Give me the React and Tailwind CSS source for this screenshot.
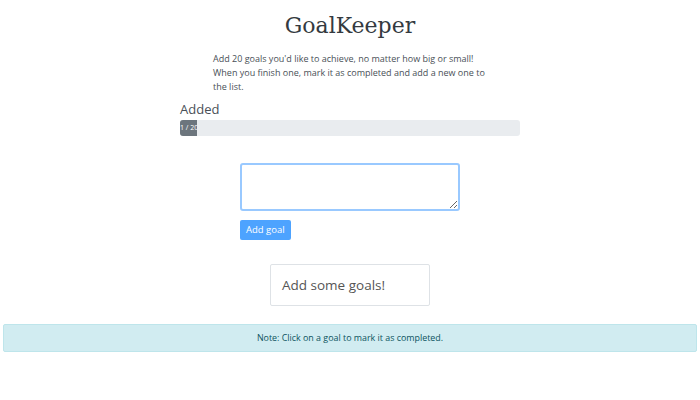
import React from 'react';

export default function App() {
  return (
    <div className="w-[700px] h-[400px] bg-white text-[#212529]" style={{ fontFamily: '"Open Sans", sans-serif' }}>
      <h1 className="pt-[9px] text-center text-[22px] leading-[34px] text-[#343a40]" style={{ fontFamily: '"DejaVu Serif", serif' }}>
        GoalKeeper
      </h1>

      <div className="mx-auto w-[340px]">
        <p className="mt-[9px] px-[33px] text-[9px] leading-[14px] text-[#495057]">
          Add 20 goals you'd like to achieve, no matter how big or small! When you finish one, mark it as completed and add a new one to the list.
        </p>
        <div className="mt-[7px] text-[13px] leading-[16px] text-[#495057]">Added</div>
        <div className="mt-[3px] h-[16px] w-full overflow-hidden rounded-[3px] bg-[#e9ecef]">
          <div className="flex h-full w-[17px] items-center overflow-hidden whitespace-nowrap bg-[#6c757d] text-[7px] text-white">
            1 / 20
          </div>
        </div>
      </div>

      <div className="mx-auto mt-[27px] w-[220px]">
        <textarea className="block h-[48px] w-full resize-y rounded-[3px] border-2 border-[#99c9ff] outline-none" />
        <button className="mt-[9px] block h-[20px] rounded-[2px] bg-[#4da3ff] px-[6px] text-[9.5px] text-white">
          Add goal
        </button>
      </div>

      <div className="mx-auto mt-[24px] flex h-[42px] w-[160px] items-center rounded-[2px] border border-[#dee2e6] pl-[11px] text-[13.5px] text-[#555]">
        Add some goals!
      </div>

      <div className="mx-[3px] mt-[18px] flex h-[28px] items-center justify-center rounded-[2px] border border-[#bee5eb] bg-[#d1ecf1] text-[8.9px] text-[#0c5460]">
        Note: Click on a goal to mark it as completed.
      </div>
    </div>
  );
}
